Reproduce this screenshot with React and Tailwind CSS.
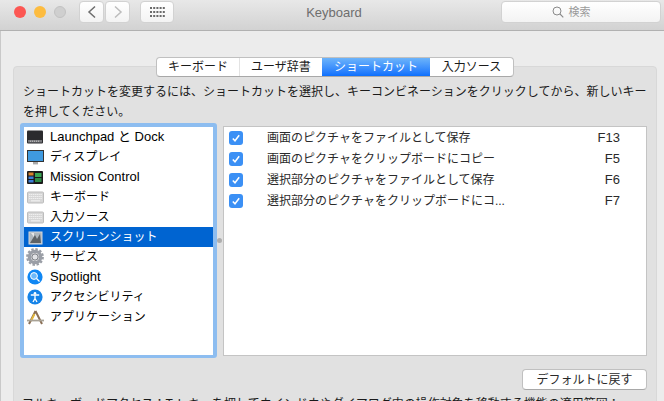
import React from "react";

const FONT = '"Liberation Sans","Noto Sans CJK JP",sans-serif';

function Gear() {
  return (
    <svg width="18" height="18" viewBox="0 0 18 18">
      <circle cx="9" cy="9" r="5.6" fill="none" stroke="#9a9ea6" strokeWidth="3.4" />
      <circle cx="9" cy="9" r="7.8" fill="none" stroke="#9a9ea6" strokeWidth="2.2" strokeDasharray="2.4 1.7" />
      <circle cx="9" cy="9" r="3.2" fill="#e2e3e6" stroke="#6f7278" strokeWidth="1" />
    </svg>
  );
}

function Keyboard() {
  return (
    <svg width="17" height="13" viewBox="0 0 17 13">
      <rect x="0.5" y="1" width="16" height="11" rx="1" fill="#d6d6d6" stroke="#bdbdbd" />
      <path d="M2 3.5h13M2 5.5h13M2 7.5h13" stroke="#efefef" strokeWidth="1" strokeDasharray="1.4 .5" />
      <path d="M4 9.8h9" stroke="#efefef" strokeWidth="1.2" />
    </svg>
  );
}

const icons = {
  launchpad: (
    <svg width="16" height="14" viewBox="0 0 16 14">
      <rect x="0" y="0.5" width="16" height="13" rx="1" fill="#2b2b2e" />
      <rect x="1" y="10" width="14" height="2.5" fill="#77787c" />
      <path d="M3 11.2h10" stroke="#ccc" strokeDasharray="1 1" />
    </svg>
  ),
  display: (
    <svg width="17" height="15" viewBox="0 0 17 15">
      <rect x="0.5" y="0.5" width="16" height="11" fill="#3f9ae0" stroke="#333" />
      <rect x="6" y="12" width="5" height="2.4" fill="#aaa" />
    </svg>
  ),
  mission: (
    <svg width="16" height="13" viewBox="0 0 16 13">
      <rect width="16" height="13" rx="1" fill="#1a1a1a" />
      <rect x="1.5" y="1.5" width="5" height="3" fill="#d9822b" />
      <rect x="1.5" y="5.5" width="5" height="2.5" fill="#3b7dd8" />
      <rect x="1.5" y="9" width="5" height="2.5" fill="#3b7dd8" />
      <rect x="8" y="2" width="6.5" height="4" fill="#3aa655" />
      <rect x="8" y="7" width="6.5" height="4" fill="#2d8a47" />
    </svg>
  ),
  keyboard: <Keyboard />,
  shot: (
    <svg width="15" height="15" viewBox="0 0 15 15">
      <rect x="1" y="2" width="13" height="12" fill="#aeb6bd" stroke="#d5d8dc" />
      <path d="M2 13 L7 5 L9 9 L12 4 L13 13Z" fill="#5d6266" />
      <path d="M3 3h3v4z" fill="#e8e8e8" />
    </svg>
  ),
  gear: <Gear />,
  spotlight: (
    <svg width="16" height="16" viewBox="0 0 16 16">
      <circle cx="8" cy="8" r="7.6" fill="#1087f4" />
      <circle cx="7" cy="7" r="3.4" fill="#6db9fa" stroke="#fff" strokeWidth="1" />
      <path d="M9.5 9.5l3 3" stroke="#fff" strokeWidth="1.3" />
    </svg>
  ),
  access: (
    <svg width="16" height="16" viewBox="0 0 16 16">
      <circle cx="8" cy="8" r="7.6" fill="#1583e8" />
      <circle cx="8" cy="4.2" r="1.3" fill="#fff" />
      <path d="M3.8 6h8.4M8 6v3.5M8 9.5L6 13M8 9.5L10 13" stroke="#fff" strokeWidth="1.3" fill="none" />
    </svg>
  ),
  apps: (
    <svg width="17" height="15" viewBox="0 0 17 15">
      <path d="M8.5 1L2 14M8.5 1L15 14" stroke="#8a6f55" strokeWidth="2" fill="none" />
      <path d="M7.5 4L4 11" stroke="#e6b93c" strokeWidth="1.8" fill="none" />
      <path d="M0 10.5h17" stroke="#a8a296" strokeWidth="1.8" />
    </svg>
  ),
};

const items = [
  ["launchpad", "Launchpad と Dock", "text-[13px]"],
  ["display", "ディスプレイ", "text-[12px]"],
  ["mission", "Mission Control", "text-[13px]"],
  ["keyboard", "キーボード", "text-[12px]"],
  ["keyboard", "入力ソース", "text-[12px]"],
  ["shot", "スクリーンショット", "text-[12px]"],
  ["gear", "サービス", "text-[12px]"],
  ["spotlight", "Spotlight", "text-[13px]"],
  ["access", "アクセシビリティ", "text-[12px]"],
  ["apps", "アプリケーション", "text-[12px]"],
];

const rows = [
  ["画面のピクチャをファイルとして保存", "F13"],
  ["画面のピクチャをクリップボードにコピー", "F5"],
  ["選択部分のピクチャをファイルとして保存", "F6"],
  ["選択部分のピクチャをクリップボードにコ...", "F7"],
];

function Check() {
  return (
    <div className="flex h-[14px] w-[14px] items-center justify-center rounded-[3px] bg-[#3b90f5]">
      <svg width="10" height="10" viewBox="0 0 10 10">
        <path d="M1.8 5.4L4 7.8L8.2 2.2" fill="none" stroke="#fff" strokeWidth="1.5" />
      </svg>
    </div>
  );
}

function TitleButton({ className, children }) {
  return (
    <div className={"flex h-[22px] items-center justify-center rounded-[4px] border border-[#d2d2d2] bg-gradient-to-b from-[#ffffff] to-[#f3f3f3] " + className}>
      {children}
    </div>
  );
}

export default function App() {
  return (
    <div className="h-[401px] w-[664px] overflow-hidden bg-[#ececec] text-[12px] text-[#1a1a1a]" style={{ fontFamily: FONT }}>
      <div className="flex h-[31px] items-center border-b border-[#b1b1b1] bg-gradient-to-b from-[#e8e8e8] to-[#d2d2d2] pb-[6px]">
        <div className="ml-[14px] flex gap-[8px]">
          <div className="h-[12px] w-[12px] rounded-full bg-[#fc5753]" />
          <div className="h-[12px] w-[12px] rounded-full bg-[#fdbc40]" />
          <div className="h-[12px] w-[12px] rounded-full border border-[#c2c2c2] bg-[#cfcfcf]" />
        </div>
        <div className="ml-[13px] flex gap-[1px]">
          <TitleButton className="w-[25px]">
            <svg width="10" height="14" viewBox="0 0 10 14"><path d="M8 1.5L2 7l6 5.5" fill="none" stroke="#6d6d6d" strokeWidth="1.5" /></svg>
          </TitleButton>
          <TitleButton className="w-[25px]">
            <svg width="10" height="14" viewBox="0 0 10 14"><path d="M2 1.5L8 7l-6 5.5" fill="none" stroke="#bcbcbc" strokeWidth="1.5" /></svg>
          </TitleButton>
        </div>
        <TitleButton className="ml-[10px] w-[34px]">
          <svg width="15" height="11" viewBox="0 0 15 11" fill="#6a6a6a">
            {[0, 4, 8].map((y) => [0, 3.2, 6.4, 9.6, 12.8].map((x) => <rect key={x + "-" + y} x={x} y={y} width="2" height="2" />))}
          </svg>
        </TitleButton>
        <div className="flex-1 pr-[7px] pt-[2px] text-center text-[13px] text-[#6e6e6e]">Keyboard</div>
        <TitleButton className="mr-[3px] w-[160px] gap-[5px] pr-[20px]">
          <svg width="12" height="12" viewBox="0 0 12 12"><circle cx="5" cy="5" r="4" fill="none" stroke="#8a8a8a" /><path d="M8 8l3.3 3.3" stroke="#8a8a8a" strokeWidth="1.1" /></svg>
          <span className="text-[11px] text-[#9a9a9a]">検索</span>
        </TitleButton>
      </div>

      <div className="h-[370px] border-l border-[#c9c9c9] pt-[35px]">
        <div className="ml-[12px] h-[400px] w-[644px] rounded-[4px] border border-[#d8d8d8] bg-[#e1e1e1]">
          <div className="-mt-[10px] ml-[142px] flex h-[20px] w-[358px] items-center overflow-hidden rounded-[4px] border border-[#c0c0c0] border-b-[#a8a8a8] bg-white text-[12px]">
            <div className="flex h-full w-[83px] items-center justify-center border-r border-[#e3e3e3]">キーボード</div>
            <div className="flex h-full w-[82px] items-center justify-center">ユーザ辞書</div>
            <div className="flex h-full w-[108px] items-center justify-center bg-gradient-to-b from-[#6cb3fa] to-[#0a6ffd] text-white">ショートカット</div>
            <div className="flex h-full flex-1 items-center justify-center">入力ソース</div>
          </div>

          <div className="ml-[9px] mt-[5px] w-[626px] text-[12px] leading-[20px] text-[#1a1a1a]">
            ショートカットを変更するには、ショートカットを選択し、キーコンビネーションをクリックしてから、新しいキーを押してください。
          </div>

          <div className="ml-[6px] mt-[1px] flex items-start">
            <div className="h-[235px] w-[197px] rounded-[3px] border-[4px] border-b-[3px] border-[#8dbdf0] bg-white">
              {items.map(([icon, label, size], i) => (
                <div key={i} className={"flex h-[20px] items-center " + (i === 5 ? "bg-[#0064d1] text-white" : "text-black")}>
                  <div className="flex w-[22px] shrink-0 items-center justify-center">{icons[icon]}</div>
                  <span className={"ml-[4px] -mt-[1px] leading-none " + size}>{label}</span>
                </div>
              ))}
            </div>
            <div className="relative w-[6px]">
              <div className="absolute left-0 top-[115px] h-[5px] w-[5px] rounded-full bg-[#aeaeae]" />
            </div>
            <div className="mt-[3px] h-[230px] w-[424px] border border-[#c4c4c4] bg-white">
              {rows.map(([label, key], i) => (
                <div key={i} className="flex h-[21px] items-center">
                  <div className="ml-[5px]"><Check /></div>
                  <span className="ml-[24px] flex-1 whitespace-nowrap text-[12px] text-[#2a2a2a]">{label}</span>
                  <span className="mr-[26px] text-[13px] text-[#2a2a2a]">{key}</span>
                </div>
              ))}
            </div>
          </div>

          <div className="ml-[508px] mt-[11px] flex h-[21px] w-[125px] items-center justify-center rounded-[4px] border border-[#c0c0c0] border-b-[#a8a8a8] bg-white text-[12px] text-[#2a2a2a]">
            デフォルトに戻す
          </div>
          <div className="ml-[8px] mt-[5px] whitespace-nowrap text-[12px] leading-[18px] text-[#1a1a1a]">
            フルキーボードアクセス：Tab キーを押してウインドウやダイアログ内の操作対象を移動する機能の適用範囲：
          </div>
        </div>
      </div>
    </div>
  );
}
